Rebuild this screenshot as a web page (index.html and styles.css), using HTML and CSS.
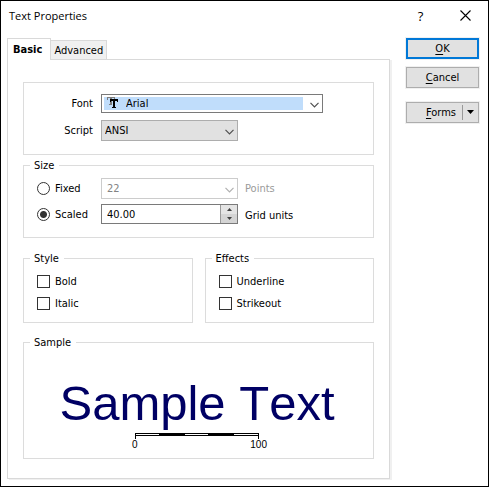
FILE: index.html
```html
<!DOCTYPE html>
<html lang="en">
<head>
<meta charset="utf-8">
<title>Text Properties</title>
<link rel="stylesheet" href="styles.css">
</head>
<body>
<div class="dialog">
  <header class="titlebar">
    <h1 class="title">Text Properties</h1>
    <button class="title-button" type="button">?</button>
    <button class="title-button" type="button" aria-label="Close">
      <svg width="11" height="11" viewBox="0 0 11 11"><path d="M.5.5l10 10M10.5.5l-10 10" fill="none" stroke="#000" stroke-width="1.1"/></svg>
    </button>
  </header>
  <form class="main">
    <div class="sheet">
      <div class="tabs" role="tablist">
        <button class="tab tab-active" type="button" role="tab" aria-selected="true">Basic</button>
        <button class="tab" type="button" role="tab" aria-selected="false">Advanced</button>
      </div>
      <div class="panel" role="tabpanel">
        <div class="group fonts">
          <div class="row">
            <label class="name" for="font">Font</label>
            <div class="combo combo-font">
              <svg class="combo-icon" width="12" height="12" viewBox="0 0 12 12" shape-rendering="crispEdges">
                <path d="M0 0h8v3H7V1H5v7H2V7h1V1H1v2H0z" fill="#7c7c7c"/>
                <path d="M3 2h8v3h-1V3H8v7h1v1H5v-1h1V3H4v2H3z" fill="#000"/>
                <path d="M4 3h6v1H4z" fill="#000"/>
              </svg>
              <select class="select" id="font"><option>Arial</option></select>
              <svg class="chevron" width="9" height="6" viewBox="0 0 9 6"><path d="M.5.8l4 4 4-4" fill="none" stroke="#505050" stroke-width="1.200"/></svg>
            </div>
          </div>
          <div class="row">
            <label class="name" for="script">Script</label>
            <div class="combo">
              <select class="select select-gray" id="script"><option>ANSI</option></select>
              <svg class="chevron" width="9" height="6" viewBox="0 0 9 6"><path d="M.5.8l4 4 4-4" fill="none" stroke="#505050" stroke-width="1.200"/></svg>
            </div>
          </div>
        </div>

        <fieldset class="group size">
          <legend>Size</legend>
          <div class="row">
            <label class="choice"><input class="radio" type="radio" name="mode">Fixed</label>
            <div class="combo">
              <select class="select" id="points" disabled><option>22</option></select>
              <svg class="chevron" width="9" height="6" viewBox="0 0 9 6"><path d="M.5.8l4 4 4-4" fill="none" stroke="#b0b0b0" stroke-width="1.200"/></svg>
            </div>
            <label class="unit unit-off" for="points">Points</label>
          </div>
          <div class="row">
            <label class="choice"><input class="radio" type="radio" name="mode" checked>Scaled</label>
            <div class="spinner">
              <input class="number" id="units" type="text" value="40.00">
              <div class="steps">
                <button class="step" type="button" aria-label="Increase"><svg width="5" height="3" viewBox="0 0 5 3"><path d="M0 3L2.500 0 5 3z" fill="#404040"/></svg></button>
                <button class="step" type="button" aria-label="Decrease"><svg width="5" height="3" viewBox="0 0 5 3"><path d="M0 0h5L2.500 3z" fill="#404040"/></svg></button>
              </div>
            </div>
            <label class="unit" for="units">Grid units</label>
          </div>
        </fieldset>

        <div class="pair">
          <fieldset class="group checks">
            <legend>Style</legend>
            <label class="choice"><input class="check" type="checkbox">Bold</label>
            <label class="choice"><input class="check" type="checkbox">Italic</label>
          </fieldset>
          <fieldset class="group checks">
            <legend>Effects</legend>
            <label class="choice"><input class="check" type="checkbox">Underline</label>
            <label class="choice"><input class="check" type="checkbox">Strikeout</label>
          </fieldset>
        </div>

        <fieldset class="group sample">
          <legend>Sample</legend>
          <div class="sample-text">Sample Text</div>
          <div class="scale">
            <svg class="scale-bar" width="124" height="6" viewBox="0 0 124 6">
              <path d="M0 0h124v3H0z" fill="#000"/>
              <path d="M1 1h23v1H1zM50 1h23v1H50zM99 1h24v1H99z" fill="#fff"/>
              <path d="M0 0h1v6H0zM123 0h1v6h-1z" fill="#000"/>
            </svg>
            <div class="scale-labels"><span>0</span><span>100</span></div>
          </div>
        </fieldset>
      </div>
    </div>

    <div class="actions">
      <button class="button button-default" type="button"><span><u>O</u>K</span></button>
      <button class="button" type="button"><span><u>C</u>ancel</span></button>
      <button class="button button-split" type="button">
        <span class="split-text"><u>F</u>orms</span>
        <svg class="split-arrow" width="7" height="4" viewBox="0 0 7 4"><path d="M0 0h7L3.500 4z" fill="#000"/></svg>
      </button>
    </div>
  </form>
</div>
</body>
</html>
```

FILE: styles.css
```css
* {
  box-sizing: border-box;
}

body {
  margin: 0;
  background: #fff;
  color: #000;
  font: 11px/15px "DejaVu Sans Condensed", "DejaVu Sans", sans-serif;
}

button,
input,
select {
  margin: 0;
  color: inherit;
  font: inherit;
}

svg {
  display: block;
}

.dialog {
  display: flex;
  flex-direction: column;
  min-height: 100vh;
  border: 1px solid #000;
}

.titlebar {
  display: flex;
  align-items: center;
  height: 37px;
  padding: 0 0 8px 8px;
}

.title {
  flex: 1;
  margin: 0;
  font: 11px/16px "Open Sans", sans-serif;
}

.title-button {
  display: flex;
  align-items: center;
  justify-content: center;
  width: 45px;
  height: 28px;
  padding: 0;
  border: 0;
  background: none;
  font: 13px/16px "Open Sans", sans-serif;
}

.main {
  display: flex;
  flex: 1;
  gap: 16px;
  padding: 0 9px 7px 6px;
}

.sheet {
  display: flex;
  flex: 1;
  flex-direction: column;
}

.tabs {
  display: flex;
  align-items: flex-end;
  height: 21px;
}

.tab {
  height: 19px;
  padding: 0 3px;
  border: 1px solid #d9d9d9;
  border-width: 1px 1px 0 0;
  background: #f0f0f0;
}

.tab-active {
  z-index: 1;
  height: 22px;
  margin-bottom: -1px;
  padding: 0 8px 0 5px;
  border-left-width: 1px;
  background: #fff;
  font-weight: bold;
}

.panel {
  flex: 1;
  padding: 22px 15px 19px;
  border: 1px solid #d9d9d9;
  box-shadow: 2px 1px 0 #f0f0f0;
}

.group {
  min-width: 0;
  margin: 0;
  border: 1px solid #dcdcdc;
}

legend {
  height: 15px;
  padding: 0 5px 0 4px;
}

.fonts,
.size {
  display: flex;
  flex-direction: column;
}

.fonts {
  gap: 7px;
  padding: 11px 0 13px;
}

.row {
  display: flex;
  align-items: center;
}

.name {
  width: 77px;
  padding-right: 8px;
  text-align: right;
}

.combo {
  position: relative;
  width: 137px;
}

.combo-font {
  width: 222px;
}

.combo-icon {
  position: absolute;
  top: 3px;
  left: 6px;
}

.select {
  display: block;
  width: 100%;
  height: 21px;
  padding: 0 20px 0 3px;
  border: 1px solid #adadad;
  border-radius: 0;
  background: #fff;
  appearance: none;
}

.combo-font .select {
  height: 19px;
  padding-left: 24px;
  border-color: #7a7a7a;
  background: linear-gradient(#c0ddfb, #c0ddfb) 2px 2px / 199px 13px no-repeat #fff;
}

.select-gray {
  background: #e1e1e1;
}

.select:disabled {
  padding-left: 5px;
  border-color: #ccc;
  color: #838383;
  opacity: 1;
}

.chevron {
  position: absolute;
  top: calc(50% - 2px);
  right: 4px;
}

.size {
  padding: 0 0 12px;
}

.size .row {
  margin-top: 5px;
}

.size .row + .row {
  align-items: flex-start;
}

.size .choice {
  width: 77px;
}

.size legend,
.checks legend,
.sample legend {
  margin-left: 6px;
}

.choice {
  display: flex;
  align-items: center;
  gap: 5px;
  height: 22px;
  padding-left: 13px;
}

.size .choice {
  height: 21px;
}

.radio,
.check {
  flex: none;
  width: 13px;
  height: 13px;
  border: 1px solid #333;
  background: #fff;
  appearance: none;
}

.radio {
  border-radius: 50%;
}

.radio:checked {
  background: radial-gradient(circle, #333 3px, #fff 4px);
}

.unit {
  padding-left: 7px;
}

.size .row + .row .unit {
  padding-top: 4px;
}

.unit-off {
  color: #9a9a9a;
}

.spinner {
  display: flex;
  width: 137px;
  height: 20px;
  border: 1px solid #7a7a7a;
}

.number {
  flex: 1;
  min-width: 0;
  padding: 0 0 0 5px;
  border: 0;
  background: #fff;
}

.steps {
  display: flex;
  flex-direction: column;
  width: 17px;
  border-left: 1px solid #999;
}

.step {
  display: flex;
  flex: 1;
  align-items: center;
  justify-content: center;
  padding: 0;
  border: 0;
  background: #e4e4e4;
}

.step + .step {
  background: #d4d4d4;
}

.pair {
  display: flex;
  gap: 12px;
  margin: 13px 0 12px;
}

.checks {
  flex: 1;
  padding: 4px 0 8px;
}

.fonts + .size {
  margin-top: 3px;
}

.sample {
  padding: 25px 3px 7px 0;
}

.sample-text {
  color: #000064;
  font: 49px/56px "Liberation Sans", Arial, sans-serif;
  font-kerning: none;
  text-align: center;
  white-space: nowrap;
}

.scale {
  width: 124px;
  margin: 2px auto 0;
}

.scale-labels {
  display: flex;
  justify-content: space-between;
  margin: 0 -8px 0 -3px;
  font: 10px/12px "Liberation Sans", Arial, sans-serif;
}

.actions {
  display: flex;
  flex-direction: column;
  gap: 8px;
  width: 73px;
}

.button {
  display: flex;
  align-items: center;
  justify-content: center;
  height: 21px;
  padding: 0;
  border: 1px solid #adadad;
  outline: 1px solid #f0f0f0;
  background: #e1e1e1;
}

.button u {
  text-underline-offset: 2px;
}

.button-default {
  border: 2px solid #0078d7;
}

.button-split {
  margin-top: 6px;
}

.split-text {
  flex: 1;
  padding-right: 6px;
  text-align: right;
}

.split-arrow {
  width: 16px;
  height: 15px;
  padding: 5px 4px 6px;
  border-left: 1px solid #999;
}
```
